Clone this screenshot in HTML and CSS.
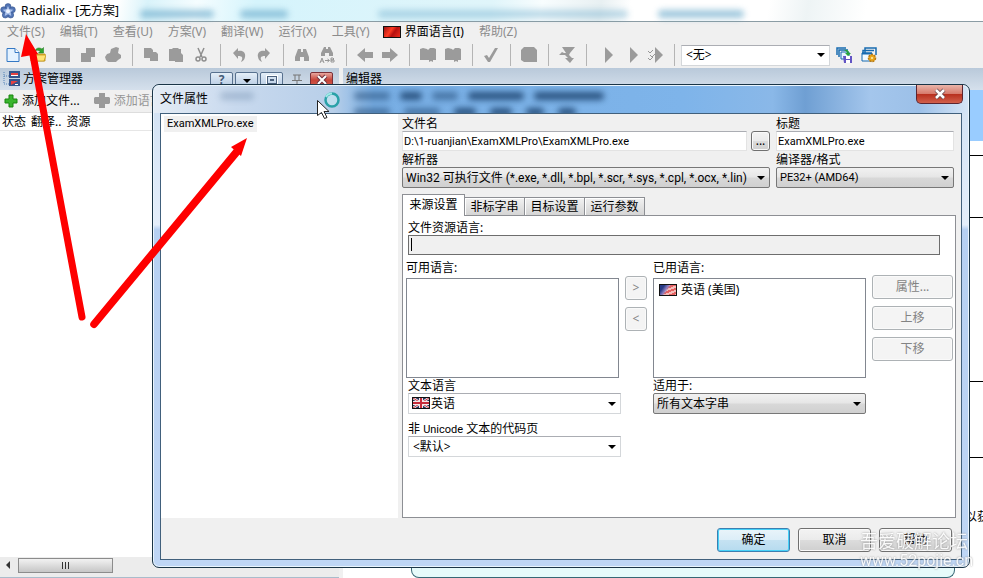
FILE: index.html
```html
<!DOCTYPE html>
<html lang="zh-CN">
<head>
<meta charset="utf-8">
<title>Radialix - [无方案]</title>
<link rel="stylesheet" href="styles.css">
</head>
<body>
<div class="app">
  <header class="titlebar">
    <svg class="logo" viewBox="0 0 16 16"><g fill="#5375b5" stroke="#34548f" stroke-width=".6"><circle cx="8" cy="3.6" r="3"/><circle cx="12.3" cy="6.8" r="3"/><circle cx="10.7" cy="12" r="3"/><circle cx="5.3" cy="12" r="3"/><circle cx="3.7" cy="6.8" r="3"/></g><path d="M8 3l1.6 3.2 3.6.5-2.5 2.6.6 3.7L8 11.300l-3.300 1.700.6-3.700-2.500-2.600 3.600-.5z" fill="#a9c0ea"/><circle cx="8" cy="8.300" r="2" fill="#eef4ff"/></svg>
    <h1 class="app-title">Radialix - [无方案]</h1>
    <div class="glass" aria-hidden="true"><i class="smudge s1"></i><i class="smudge s2"></i><i class="smudge s3"></i><i class="smudge s4"></i></div>
  </header>

  <nav class="menubar">
    <button class="menu">文件(S)</button>
    <button class="menu">编辑(T)</button>
    <button class="menu">查看(U)</button>
    <button class="menu">方案(V)</button>
    <button class="menu">翻译(W)</button>
    <button class="menu">运行(X)</button>
    <button class="menu">工具(Y)</button>
    <button class="menu menu-lang"><span class="flag flag-cn"></span>界面语言(I)</button>
    <button class="menu">帮助(Z)</button>
  </nav>

  <div class="toolbar">
    <button class="tool" aria-label="新建"><svg viewBox="0 0 16 16"><path d="M2 1.500h8l4 4v9H2z" fill="#e4f2ff" stroke="#3478c4"/><path d="M10 1.500v4h4" fill="#fff" stroke="#3478c4"/></svg></button>
    <button class="tool" aria-label="打开"><svg viewBox="0 0 16 16"><path d="M1 14V5h5l1 2h8v7z" fill="#e8b92e" stroke="#b88a12" stroke-width=".8"/><path d="M1 14l3-6h12l-2 6z" fill="#ffe375" stroke="#c79b22" stroke-width=".8"/><path d="M5 4c1-3 4-4 7-2l1.500-1.500V6H8.500l1.700-1.700C8.500 3 6.500 3 5 4z" fill="#2ea52e" stroke="#157315" stroke-width=".5"/></svg></button>
    <button class="tool" aria-label="保存"><svg viewBox="0 0 16 16"><path d="M1 1h14v14H1z"/></svg></button>
    <button class="tool" aria-label="全部保存"><svg viewBox="0 0 16 16"><path d="M6 1h9v9h-4v5H1V6h5z"/></svg></button>
    <button class="tool" aria-label="打印"><svg viewBox="0 0 16 16"><path d="M6 2l5-2 3 1-1 5 3 2v3l-3 2-2 2H3L1 13l-1-3 2-3 3-1z"/></svg></button>
    <i class="sep"></i>
    <button class="tool" aria-label="复制"><svg viewBox="0 0 16 16"><path d="M1 1h7l2 2v2h3l2 2v7H7v-3H1z"/></svg></button>
    <button class="tool" aria-label="粘贴"><svg viewBox="0 0 16 16"><path d="M1 2h3l1-1h5l1 1h2v4l2 2v7H7v-1H1z"/></svg></button>
    <button class="tool" aria-label="剪切"><svg viewBox="0 0 16 16"><g fill="none" stroke="#8e8e8e" stroke-width="1.500"><path d="M5 1l4 9M11 1L7 10"/><circle cx="5" cy="12" r="2"/><circle cx="11" cy="12" r="2"/></g></svg></button>
    <i class="sep"></i>
    <button class="tool" aria-label="撤消"><svg viewBox="0 0 16 16"><path d="M2 6l5-5v3c5-1 8 2 7 6-.5 3-2 4-4 5 2-4 2-6-3-6v3z"/></svg></button>
    <button class="tool" aria-label="重做"><svg viewBox="0 0 16 16"><path d="M14 6L9 1v3C4 3 1 6 2 10c.5 3 2 4 4 5-2-4-2-6 3-6v3z"/></svg></button>
    <i class="sep"></i>
    <button class="tool" aria-label="查找"><svg viewBox="0 0 16 16"><path d="M4 2h3v3h2V2h3l3 8v4h-5v-4H6v4H1v-4z"/></svg></button>
    <button class="tool" aria-label="替换"><svg viewBox="0 0 16 16"><path d="M5 0h2v2h2V0h2l3 6v3h-4V6H6v3H2V6z"/><path d="M1 16l2-5 2 5M2 14h2M6 13.500h4M8.500 12l2 1.500-2 1.500M12 11h2l1 1-1 1h-2zm0 2h3v2h-3z" fill="none" stroke="#969696"/></svg></button>
    <i class="sep"></i>
    <button class="tool" aria-label="后退"><svg viewBox="0 0 16 16"><path d="M0 8l8-7v4h8v6H8v4z"/></svg></button>
    <button class="tool" aria-label="前进"><svg viewBox="0 0 16 16"><path d="M16 8L8 1v4H0v6h8v4z"/></svg></button>
    <i class="sep"></i>
    <button class="tool" aria-label="词典"><svg viewBox="0 0 16 16"><path d="M0 2l3-1 4 1 1 1 2-2h4l2 1v11h-3v2l-2-1-2 1v-2H0z"/></svg></button>
    <button class="tool" aria-label="词库"><svg viewBox="0 0 16 16"><path d="M0 2l3-1 4 1 1 1 2-2h4l2 1v11h-3v2l-2-1-2 1v-2H0z"/></svg></button>
    <i class="sep"></i>
    <button class="tool" aria-label="检查"><svg viewBox="0 0 16 16"><path d="M1 9l3-1 2 3 6-10h3L7 15H5z"/></svg></button>
    <i class="sep"></i>
    <button class="tool" aria-label="资源"><svg viewBox="0 0 16 16"><path d="M3 0h10l3 3v12H3l-3-2V3z"/></svg></button>
    <i class="sep"></i>
    <button class="tool" aria-label="过滤"><svg viewBox="0 0 16 16"><path d="M3 0h13l-5 6-1 2 3 3h2l-4 5-5-5h3L6 8H0l3-3 2 1h2z"/></svg></button>
    <i class="sep"></i>
    <button class="tool tool-run" aria-label="运行"><svg viewBox="0 0 16 16"><path d="M5 0l8 8-8 8z"/></svg></button>
    <button class="tool tool-run" aria-label="运行译文"><svg viewBox="0 0 16 16"><path d="M5 0l8 8-8 8z"/></svg></button>
    <button class="tool" aria-label="运行全部"><svg viewBox="0 0 16 16"><path d="M8 0l8 8-8 8z"/><path d="M1 4l2 2 3-3M3 8l2 2 3-3M1 11l2 2 3-3" fill="none" stroke="#969696"/></svg></button>
    <i class="sep"></i>
    <select class="combo plan" aria-label="方案"><option>&lt;无&gt;</option></select>
    <button class="tool" aria-label="保存布局"><svg viewBox="0 0 16 16"><path d="M1 8V1h9M3 10V3h9" fill="none" stroke="#176bb0" stroke-width="1.500"/><path d="M5 5h8v7H5z" fill="#e9f5ff" stroke="#176bb0"/><path d="M7 9h9v7H8z" fill="#6255c4"/><path d="M10 9h4v3h-4zM10 13h4v3h-4z" fill="#fff"/><path d="M8 3c3-1 5 1 5 3h2l-3 3-3-3h2c0-1-1-2-3-3z" fill="#28a43a"/></svg></button>
    <button class="tool" aria-label="管理布局"><svg viewBox="0 0 16 16"><path d="M4 6V1h11v7M2 8V3.500h11" fill="none" stroke="#176bb0" stroke-width="1.500"/><path d="M1 6h10v8H1z" fill="#f3faff" stroke="#176bb0"/><path d="M1 6.500h10" stroke="#176bb0" stroke-width="2"/><circle cx="11" cy="11" r="3.500" fill="#e9a61c" stroke="#b77812" stroke-width="1.500" stroke-dasharray="2 1"/><circle cx="11" cy="11" r="1" fill="#fff1b5"/></svg></button>
  </div>

  <main class="workspace">
    <section class="manager">
      <div class="panel-head">
        <svg class="tree" viewBox="0 0 18 16"><path d="M1 1v12h5M1 5h5" fill="none" stroke="#5583b7" stroke-dasharray="1 1"/><path d="M6 0h11v7H6zM6 8h11v7H6z" fill="#35558c"/><path d="M8 2h7v2H8zM8 10l7 0-7 4z" fill="#e64242"/><path d="M8 4h7v1H8zM12 13h3v1h-3z" fill="#fff"/></svg>
        <h2>方案管理器</h2>
        <div class="panel-tools">
          <button class="mini" aria-label="帮助">?</button>
          <button class="mini" aria-label="菜单"><i class="caret"></i></button>
          <button class="mini" aria-label="最大化"><i class="square"></i></button>
          <button class="mini pin" aria-label="固定"><svg viewBox="0 0 12 12"><path d="M2 1h8M4 1v5M8 1v5M1 6.500h10M6 7v5" fill="none" stroke="#777"/></svg></button>
          <button class="mini mini-close" aria-label="关闭"><svg viewBox="0 0 12 12"><path d="M2 2l8 8M10 2l-8 8" stroke="#713541" stroke-width="4"/><path d="M2 2l8 8M10 2l-8 8" stroke="#fff" stroke-width="2"/></svg></button>
        </div>
      </div>
      <div class="panel-actions">
        <button class="action"><svg viewBox="0 0 14 14"><path d="M5 1h4v4h4v4H9v4H5V9H1V5h4z" fill="#39b52d" stroke="#18850f"/></svg>添加文件...</button>
        <button class="action dim"><svg class="wide" viewBox="0 0 16 16"><path d="M5 0h6v4h4l1 1v5l-1 1h-4v4H5v-4H1l-1-1V5l1-1h4z" fill="#9a9a9a"/></svg>添加语言</button>
      </div>
      <div class="columns"><span>状态</span><span>翻译..</span><span>资源</span></div>
      <div class="list-space"></div>
      <div class="scrollbar"><i class="arrow-left"></i><div class="thumb"><i></i><i></i><i></i></div></div>
    </section>
    <section class="editor">
      <div class="panel-head"><h2>编辑器</h2></div>
      <div class="editor-body">
        <i class="band"></i><i class="cell c1"></i><i class="cell c2"></i><i class="cell c3"></i><i class="cell c4"></i>
        <div class="cell last"><span>以获</span></div>
        <div class="below"></div>
      </div>
    </section>
  </main>

  <div class="dialog" role="dialog" aria-labelledby="dialog-title">
    <div class="dialog-head">
      <h2 id="dialog-title">文件属性</h2>
      <div class="ghost" aria-hidden="true">
        <div class="ghost-row"><i class="smudge g1"></i><i class="smudge g2"></i><i class="smudge g3"></i><i class="smudge g4"></i><i class="smudge g5"></i><i class="smudge g6"></i></div>
        <div class="ghost-row low"><i class="smudge g2"></i><i class="smudge g2"></i><i class="smudge g3"></i><i class="smudge g3"></i><i class="smudge g7"></i><i class="smudge g7"></i></div>
      </div>
      <button class="close" aria-label="关闭"><svg viewBox="0 0 14 12"><path d="M3 2l8 8M11 2l-8 8" stroke="#65444a" stroke-width="4"/><path d="M3 2l8 8M11 2l-8 8" stroke="#fff" stroke-width="2.500"/></svg></button>
    </div>
    <div class="dialog-body">
      <div class="files"><span class="file">ExamXMLPro.exe</span></div>
      <form class="props">
        <div class="fields">
          <div class="field">
            <label for="name">文件名</label>
            <div class="row"><input id="name" class="text" value="D:\1-ruanjian\ExamXMLPro\ExamXMLPro.exe"><button type="button" class="btn browse" aria-label="浏览">...</button></div>
          </div>
          <div class="field">
            <label for="caption">标题</label>
            <input id="caption" class="text" value="ExamXMLPro.exe">
          </div>
          <div class="field">
            <label for="parser">解析器</label>
            <select id="parser" class="combo raised wide-text"><option>Win32 可执行文件 (*.exe, *.dll, *.bpl, *.scr, *.sys, *.cpl, *.ocx, *.lin)</option></select>
          </div>
          <div class="field">
            <label for="format">编译器/格式</label>
            <select id="format" class="combo raised small"><option>PE32+ (AMD64)</option></select>
          </div>
        </div>
        <div class="tabs" role="tablist">
          <button type="button" class="tab active" role="tab">来源设置</button><button type="button" class="tab" role="tab">非标字串</button><button type="button" class="tab" role="tab">目标设置</button><button type="button" class="tab" role="tab">运行参数</button>
        </div>
        <div class="sheet">
          <div class="resource">
            <label for="reslang">文件资源语言:</label>
            <div class="caret-box"><input id="reslang" class="text sunken" value=""><i class="cursor"></i></div>
          </div>
          <div class="langs">
            <div class="col"><span class="cap">可用语言:</span><div class="listbox"></div></div>
            <div class="movers"><button type="button" class="btn off">&gt;</button><button type="button" class="btn off">&lt;</button></div>
            <div class="col"><span class="cap">已用语言:</span><div class="listbox"><span class="item"><span class="flag flag-us"></span>英语 (美国)</span></div></div>
            <div class="side"><button type="button" class="btn off">属性...</button><button type="button" class="btn off">上移</button><button type="button" class="btn off">下移</button></div>
            <div class="field inset">
              <label for="textlang">文本语言</label>
              <div class="flag-combo"><select id="textlang" class="combo with-flag"><option>英语</option></select><svg class="flag uk" viewBox="0 0 18 12"><path d="M0 0h18v12H0z" fill="#26345f"/><path d="M1 1l16 10M17 1L1 11" stroke="#eee" stroke-width="2.500"/><path d="M1 1l16 10M17 1L1 11" stroke="#cf3340"/><path d="M9 1v10M1 6h16" stroke="#f4e9e9" stroke-width="4"/><path d="M9 1v10M1 6h16" stroke="#c62b3a" stroke-width="2"/><path d="M.5.5h17v11H.5z" fill="none" stroke="#111"/></svg></div>
            </div>
            <i></i>
            <div class="field">
              <label for="apply">适用于:</label>
              <select id="apply" class="combo raised"><option>所有文本字串</option></select>
            </div>
            <i></i>
            <div class="field inset codepage">
              <label for="codepage">非 <span class="latin">Unicode</span> 文本的代码页</label>
              <select id="codepage" class="combo"><option>&lt;默认&gt;</option></select>
            </div>
          </div>
        </div>
      </form>
      <div class="dialog-foot">
        <button class="btn primary">确定</button>
        <button class="btn">取消</button>
        <button class="btn">帮助</button>
      </div>
    </div>
  </div>

  <svg class="overlay" viewBox="0 0 983 578" aria-hidden="true">
    <path d="M82 317L33 55" stroke="#fe0000" stroke-width="7" stroke-linecap="round" fill="none"/>
    <path d="M91 322L234 149l6 5L97 326.500a3.500 3.500 0 0 1-6-4.500z" fill="#fe0000"/>
    <path d="M26 34l12 20-17 3zM247 138l-6 18-10-9z" fill="#fe0000"/>
    <circle cx="332" cy="100" r="6.500" fill="#c7edf4" fill-opacity=".5" stroke="#2aa1a8" stroke-width="2.500"/><path d="M326 97a6.500 6.500 0 0 1 6-3.500" fill="none" stroke="#9ee8e5" stroke-width="2"/>
    <path d="M317.500 100.500v15l4-3 3 6 2.500-1-3-6h5z" fill="#fff" stroke="#222"/>
  </svg>
  <div class="watermark"><span>吾爱破解论坛</span><span class="url">www.52pojie.cn</span></div>
</div>
</body>
</html>
```
FILE: styles.css
```css
* { box-sizing: border-box; }

body {
  margin: 0;
  font-family: "Noto Sans", "Noto Sans CJK SC", sans-serif;
  font-size: 12px;
  line-height: 16px;
  color: #000;
  background: #f0f0f0;
}

button, input, select { font: inherit; color: inherit; margin: 0; padding: 0; min-width: 0; }
button { border: 0; background: none; white-space: nowrap; }
h1, h2 { margin: 0; font-size: 12px; font-weight: 400; white-space: nowrap; }

.app { position: relative; display: flex; flex-direction: column; height: 100vh; overflow: hidden; }

/* main window */
.titlebar {
  display: flex; align-items: center; gap: 5px; flex: none; height: 22px;
  border-bottom: 1px solid #8b9ca4;
  background: linear-gradient(100deg, #fff 0 12%, #d9f3fa 15%, #f5fdff 20%, #d5f4fc 26%, #e0f5fa 50%, #f8fdfe 55%, #e8f0f2 61%, #fff 64% 78%, #eef4f5 82%, #fff 88%);
}
.logo { width: 16px; height: 16px; }
.glass { display: flex; align-items: flex-end; align-self: stretch; flex: 1; padding-bottom: 3px; }
.smudge { display: block; height: 8px; border-radius: 4px; filter: blur(3px); background: #5fa3c6; opacity: .6; }
.s1 { width: 74px; margin-left: 16px; }
.s2 { width: 48px; margin-left: 26px; }
.s3 { width: 250px; margin-left: 90px; opacity: .4; }
.s4 { width: 86px; margin-left: 30px; }

.menubar { display: flex; align-items: center; flex: none; height: 20px; padding-left: 7px; gap: 15px; color: #8b8b8b; }
.menu-lang { display: flex; align-items: center; gap: 4px; color: #000; margin-left: -2px; }
.flag { display: inline-block; flex: none; width: 18px; height: 12px; border: 1px solid #111; }
.flag-cn { background: linear-gradient(125deg, #9c1111, #ff3b22 40%, #b50f0f 60%, #ef2c1c); }
.flag-us { background: linear-gradient(125deg, #283a86 0 20%, #8b7fc0 38%, transparent 50%), repeating-linear-gradient(160deg, #e56161 0 2px, #f5bcb8 2px 4px); }

.toolbar { display: flex; align-items: center; flex: none; height: 26px; padding-left: 5px; gap: 9px; }
.tool { width: 16px; height: 16px; flex: none; }
.tool svg { display: block; width: 16px; height: 16px; fill: #9b9b9b; }
.tool-run svg { margin-left: 3px; }
.sep { flex: none; width: 1px; height: 22px; background: #b4b4b4; margin: 0 1px 0 2px; }

.combo {
  appearance: none; display: block; width: 100%; height: 21px; padding: 0 22px 0 4px;
  border: 1px solid #d4d7da; border-top-color: #abadb3; border-radius: 0;
  background: url("data:image/svg+xml,%3Csvg xmlns='http://www.w3.org/2000/svg' viewBox='0 0 8 4'%3E%3Cpath d='M0 0h8L4 4z'/%3E%3C/svg%3E") no-repeat right 4px center / 8px 4px, #fff;
}
.combo.raised {
  border: 1px solid #777; border-radius: 2px; padding: 0 16px 0 3px;
  background: url("data:image/svg+xml,%3Csvg xmlns='http://www.w3.org/2000/svg' viewBox='0 0 8 4'%3E%3Cpath d='M0 0h8L4 4z'/%3E%3C/svg%3E") no-repeat right 4px center / 8px 4px, linear-gradient(#f1f1f1, #e6e6e6 48%, #d8d8d8 52%, #d0d0d0);
}
.small, .text, .file, .latin { font-family: Roboto, "Noto Sans CJK SC", sans-serif; font-size: 11px; }
.wide-text { font-family: Roboto, "Noto Sans CJK SC", sans-serif; }
.plan { width: 149px; flex: none; margin: 0 -3px 0 -4px; }

.workspace { display: grid; grid-template-columns: 339px 1fr; column-gap: 4px; flex: 1; min-height: 0; }
.manager, .editor { display: flex; flex-direction: column; min-width: 0; min-height: 0; }
.panel-head {
  display: flex; align-items: center; flex: none; height: 22px; gap: 2px; padding-left: 3px;
  background: linear-gradient(#b9c9da, #d5e0ec);
}
.tree { width: 18px; height: 16px; }
.panel-tools { display: flex; gap: 2px; margin-left: auto; padding: 2px 6px 0 0; }
.mini {
  display: flex; align-items: center; justify-content: center; width: 23px; height: 16px;
  border: 1px solid #58718f; border-radius: 2px; background: linear-gradient(#e4eef8, #b5cae2);
  font-weight: 700; color: #465c78;
}
.mini svg { width: 12px; height: 12px; }
.pin { border-color: transparent; background: none; }
.mini-close { border-color: #7b3038; background: linear-gradient(#e8a79f, #c74338 50%, #d3604f); }
.caret { border: 4px solid transparent; border-top-color: #000; margin-top: 6px; }
.square { width: 10px; height: 8px; border: 1px solid #4b617d; outline: 1px solid #fff; background: linear-gradient(#4b617d, #4b617d) center / 4px 2px no-repeat; }

.panel-actions { display: flex; align-items: center; flex: none; height: 23px; padding-left: 4px; gap: 14px; border-bottom: 1px solid #ddd; }
.action { display: flex; align-items: center; gap: 4px; }
.action svg { width: 14px; height: 14px; }
.action svg.wide { width: 16px; height: 16px; }
.dim { color: #969696; }
.columns { display: flex; align-items: center; flex: none; height: 18px; padding-left: 2px; gap: 5px; background: #fff; border-bottom: 1px solid #e6e6e6; }
.list-space { flex: 1; background: #fff; }
.scrollbar { display: flex; align-items: center; flex: none; height: 21px; padding: 0 0 4px 2px; gap: 8px; border-bottom: 1px solid #a9bccb; background: #ececec; }
.arrow-left { border: 4px solid transparent; border-right-color: #333; }
.thumb { display: flex; align-items: center; justify-content: center; gap: 2px; width: 95px; height: 15px; border: 1px solid #8c8c8c; background: linear-gradient(#f2f2f2, #dcdcdc 50%, #c6c6c6); }
.thumb i { width: 1px; height: 7px; background: #333; }

.editor-body { display: flex; flex-direction: column; flex: 1; min-height: 0; background: #fff; }
.band { height: 51px; flex: none; background: #99ccff; }
.cell { border-bottom: 1px solid #000; flex: none; }
.c1 { height: 15px; }
.c2 { height: 62px; }
.c3 { height: 164px; }
.c4 { height: 76px; }
.cell.last { display: flex; flex: 1; align-items: center; justify-content: flex-end; border: 0; overflow: hidden; padding-top: 8px; }
.last span { flex: none; margin-right: -6px; }
.below { flex: none; height: 10px; margin-left: 68px; margin-right: 28px; border: 1px solid #376875; border-top: 0; border-radius: 0 0 8px 8px; background: #e6fafa; }

/* dialog window */
.dialog {
  position: absolute; inset: 84px 13px 10px 152px; display: flex; flex-direction: column;
  padding: 0 7px 7px; border: 1px solid #1b3547; border-radius: 7px;
  background: linear-gradient(#cfe0f2 0, #dce9f8 17%, #e4eefa 29%, #b6d0f2 30%, #bfd6f5 100%);
  box-shadow: inset 0 0 0 1px #eaf5fd;
}
.dialog-head {
  display: flex; flex: none; height: 28px; margin: 0 -6px; padding-left: 6px;
  border-top: 1px solid #eaf5fd; border-radius: 6px 6px 0 0;
  background: linear-gradient(90deg, #e4ecf5 0, #c8d9ee 10%, #b8cfe9 22%, #78aee4 27%, #7eb4ea 65%, #8ab8e8 76%, #6f9fd3 80%, #a4c6ec 88%, #9cc0e8 94%, #d5e5f6);
}
.dialog-head h2 { padding-top: 5px; }
.ghost { display: flex; flex-direction: column; flex: 1; overflow: hidden; padding: 6px 0 0 12px; gap: 8px; }
.ghost-row { display: flex; gap: 10px; }
.ghost-row.low { padding-left: 134px; gap: 14px; }
.ghost .smudge { flex: none; background: #173d68; opacity: .8; height: 8px; }
.ghost .g1 { width: 34px; opacity: .2; margin-right: 90px; }
.ghost .g2 { width: 36px; opacity: .5; }
.ghost .g3 { width: 22px; }
.ghost .g4 { width: 26px; opacity: .5; }
.ghost .g5 { width: 56px; }
.ghost .g6 { width: 70px; }
.ghost .g7 { width: 18px; }
.close {
  display: flex; align-items: center; justify-content: center; width: 47px; height: 19px; margin-right: 5px; margin-top: -1px;
  border: 1px solid #5c2530; border-top: 0; border-radius: 0 0 5px 5px;
  background: linear-gradient(#eab5aa, #d77b6d 48%, #b8301f 52%, #d2604c);
}
.close svg { width: 14px; height: 12px; }

.dialog-body {
  display: grid; grid-template-columns: 237px minmax(0, 1fr); grid-template-rows: minmax(0, 1fr) 41px; column-gap: 4px;
  flex: 1; min-height: 0; border: 1px solid #41607c; background: #f0f0f0;
}
.files { background: #fff; padding: 1px 3px; }
.file { display: inline-block; padding: 0 3px; background: #f0f0f0; }
.props { display: flex; flex-direction: column; min-height: 0; padding: 2px 5px 0 0; }
.fields { display: grid; grid-template-columns: minmax(0, 1fr) 178px; gap: 1px 6px; padding-right: 2px; }
.field { min-width: 0; }
.field label, .resource label { display: block; height: 15px; white-space: nowrap; }
.row { display: flex; gap: 4px; }
.text { flex: 1; width: 100%; height: 20px; padding: 0 1px; border: 1px solid #e3e3e3; border-top-color: #abadb3; background: #fff; }
.btn {
  height: 24px; border: 1px solid #707070; border-radius: 3px;
  background: linear-gradient(#f3f3f3, #ebebeb 48%, #dcdcdc 52%, #cfcfcf); box-shadow: inset 0 0 0 1px #fafafa;
}
.btn.browse { width: 19px; height: 20px; }
.btn.off { color: #838383; border-color: #adb2b5; background: #f4f4f4; }
.btn.primary { border-color: #3c7fb1; background: linear-gradient(#e9f4fa, #dceef8 48%, #c5e2f2 52%, #b6dbef); box-shadow: inset 0 0 0 1px #46d1f8; }

.tabs { display: flex; align-items: flex-end; height: 21px; margin-top: 6px; flex: none; }
.tab { width: 60px; height: 18px; border: 1px solid #8d8f94; border-left-width: 0; border-bottom: 0; background: linear-gradient(#f2f2f2, #d5d5d5); box-shadow: inset 1px 1px #fff; }
.tab.active { width: 63px; height: 22px; border-left-width: 1px; background: #fff; margin-bottom: -1px; position: relative; padding-bottom: 2px; }
.sheet { flex: 1; min-height: 0; padding: 4px 2px 0 3px; border: 1px solid #8d8f94; background: #fff; }
.resource { padding: 0 13px 0 2px; }
.caret-box { position: relative; }
.sunken { display: block; border-color: #6d6d6d; background: #f0f0f0; }
.cursor { position: absolute; left: 3px; top: 3px; width: 1px; height: 13px; background: #000; }
.langs { display: grid; grid-template-columns: minmax(0, 213fr) 22px minmax(0, 213fr) 81px; column-gap: 6px; padding-top: 5px; }
.listbox { height: 100px; padding: 3px 5px; border: 1px solid #828790; background: #fff; }
.cap { display: block; height: 18px; }
.item { display: flex; align-items: center; gap: 4px; }
.movers { display: flex; flex-direction: column; gap: 7px; padding-top: 16px; }
.side { display: flex; flex-direction: column; gap: 7px; padding-top: 15px; }
.inset { padding-left: 2px; margin-right: -2px; }
.flag-combo { position: relative; }
.with-flag { padding-left: 22px; }
.uk { position: absolute; left: 4px; top: 4px; border: 0; }
.codepage { padding-top: 7px; }

.dialog-foot { grid-column: 1 / -1; display: flex; align-items: center; justify-content: flex-end; gap: 8px; padding: 2px 9px 0 0; }
.dialog-foot .btn { width: 73px; }

/* drawn over the windows */
.overlay { position: absolute; left: 0; top: 0; width: 983px; height: 578px; pointer-events: none; }
.watermark {
  position: absolute; right: 10px; bottom: 7px; display: flex; flex-direction: column; pointer-events: none;
  font-size: 18px; line-height: 20px; color: #fff; opacity: .85; text-shadow: 0 0 2px #777; white-space: nowrap;
}
.url { font-family: Roboto, sans-serif; font-size: 16px; }
```
